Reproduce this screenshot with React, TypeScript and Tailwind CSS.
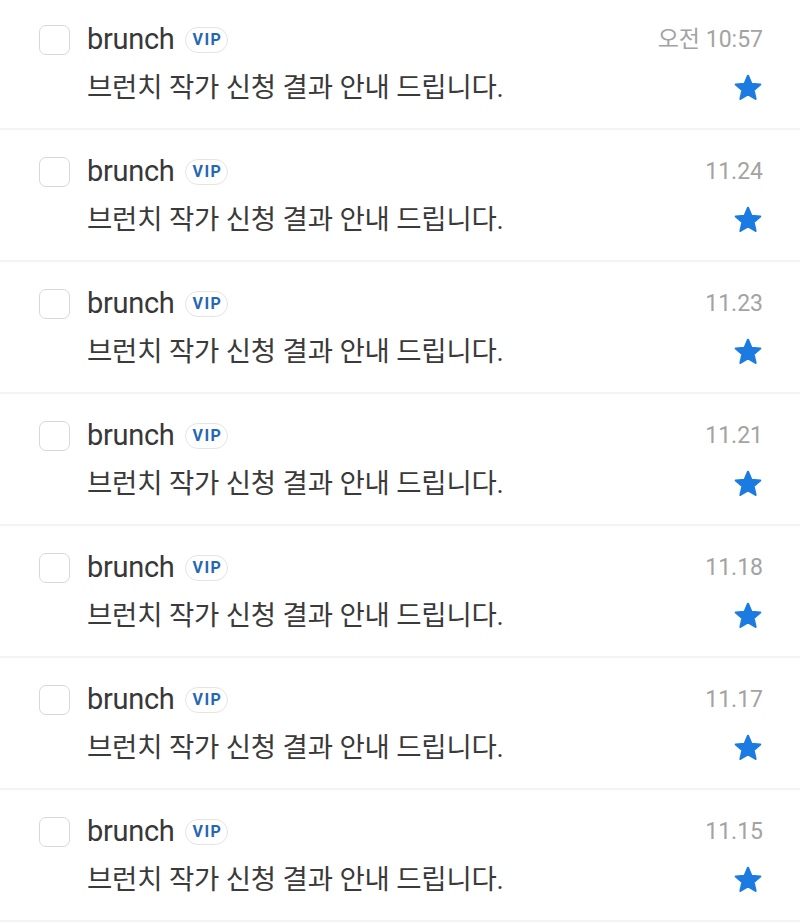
import React from 'react';

type Mail = { sender: string; subject: string; date: string };

const mails: Mail[] = [
  { sender: 'brunch', subject: '브런치 작가 신청 결과 안내 드립니다.', date: '오전 10:57' },
  { sender: 'brunch', subject: '브런치 작가 신청 결과 안내 드립니다.', date: '11.24' },
  { sender: 'brunch', subject: '브런치 작가 신청 결과 안내 드립니다.', date: '11.23' },
  { sender: 'brunch', subject: '브런치 작가 신청 결과 안내 드립니다.', date: '11.21' },
  { sender: 'brunch', subject: '브런치 작가 신청 결과 안내 드립니다.', date: '11.18' },
  { sender: 'brunch', subject: '브런치 작가 신청 결과 안내 드립니다.', date: '11.17' },
  { sender: 'brunch', subject: '브런치 작가 신청 결과 안내 드립니다.', date: '11.15' },
];

const font = "font-['Roboto','Noto_Sans_CJK_KR',sans-serif]";

const Star: React.FC = () => (
  <svg width="32" height="32" viewBox="0 0 24 24" className="block">
    <polygon
      points="12,2.8 14.6,8.9 21.2,9.4 16.2,13.7 17.7,20.2 12,16.7 6.3,20.2 7.8,13.7 2.8,9.4 9.4,8.9"
      fill="#1b7be0"
      stroke="#1b7be0"
      strokeWidth="1.6"
      strokeLinejoin="round"
    />
  </svg>
);

const MailRow: React.FC<{ mail: Mail }> = ({ mail }) => (
  <div className="h-[132px] border-b-2 border-[#f3f3f3] flex pl-[39px] pr-[37px] pt-[23px]">
    <div className="h-[38px] flex items-center">
      <div className="w-[31px] h-[30px] rounded-[7px] border-[1.5px] border-[#d8d8d8] bg-white" />
    </div>
    <div className="flex-1 ml-[17px] flex flex-col gap-[10px]">
      <div className="h-[38px] flex items-center justify-between">
        <div className="flex items-center">
          <span className={`${font} text-[29px] text-[#383838] tracking-[-0.3px]`}>{mail.sender}</span>
          <span className="ml-[11px] h-[26px] pl-[6px] pr-[5px] rounded-full border-[1.5px] border-[#e4e4e4] flex items-center font-['Roboto',sans-serif] text-[16px] font-bold text-[#2468b4] tracking-[1.5px]">
            VIP
          </span>
        </div>
        <span className={`${font} text-[23px] text-[#a3a3a3]`}>{mail.date}</span>
      </div>
      <div className="h-[38px] flex items-center justify-between">
        <span className={`${font} text-[27.5px] text-[#3a3a3a] tracking-[-0.2px]`}>{mail.subject}</span>
        <div className="mr-[-1px]">
          <Star />
        </div>
      </div>
    </div>
  </div>
);

const App: React.FC = () => {
  return (
    <div className="w-[800px] h-[924px] overflow-hidden bg-white">
      <div className="-mt-[2px]">
        {mails.map((mail, i) => (
          <MailRow key={i} mail={mail} />
        ))}
      </div>
    </div>
  );
};

export default App;
